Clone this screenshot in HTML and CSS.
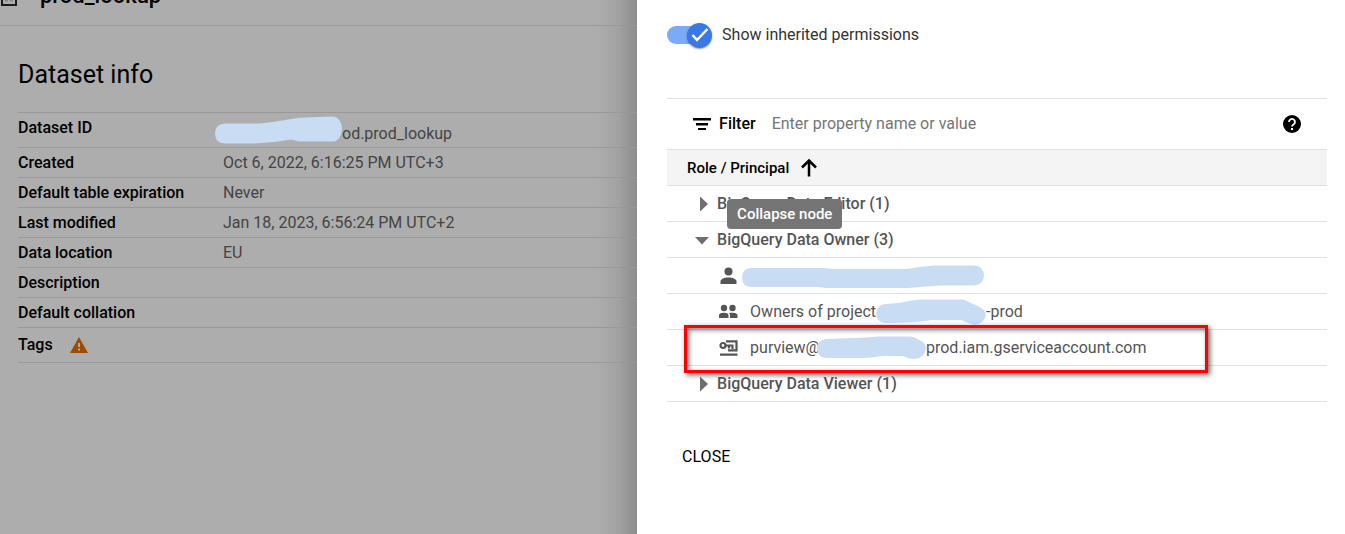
FILE: index.html
```html
<!DOCTYPE html>
<html lang="en">
<head>
    <meta charset="UTF-8">
    <meta name="viewport" content="width=device-width, initial-scale=1.0">
    <title>prod_lookup - Dataset info</title>
    <link rel="stylesheet" href="styles.css">
</head>
<body>

    <main class="dataset">
        <header class="dataset-header">
            <svg width="18" height="20" viewBox="0 0 18 20" fill="none" stroke="#1b1b1b" stroke-width="2">
                <path d="M2 1h14v18H2z"/>
                <path d="M5 14.500h3M10 14.500h3" stroke="#888"/>
            </svg>
            <span>prod_lookup</span>
        </header>

        <section class="dataset-info">
            <h2>Dataset info</h2>
            <table class="info-table">
                <tr class="tall">
                    <th scope="row" class="top">Dataset ID</th>
                    <td>
                        <div class="dataset-id">
                            <svg width="127" height="28" viewBox="0 0 127 28" fill="#c8dcf4">
                                <path d="M10 7.500H44C64 6 76 2 90 1.500L118 .5Q127 2 127 13Q126 25 118 25.500H84L76 23.500Q58 27 40 27.500H10Q0 27 0 17.500Q0 8 10 7.500Z"/>
                            </svg>
                            <span>od.prod_lookup</span>
                        </div>
                    </td>
                </tr>
                <tr>
                    <th scope="row">Created</th>
                    <td>Oct 6, 2022, 6:16:25 PM UTC+3</td>
                </tr>
                <tr>
                    <th scope="row">Default table expiration</th>
                    <td>Never</td>
                </tr>
                <tr>
                    <th scope="row">Last modified</th>
                    <td>Jan 18, 2023, 6:56:24 PM UTC+2</td>
                </tr>
                <tr>
                    <th scope="row">Data location</th>
                    <td>EU</td>
                </tr>
                <tr>
                    <th scope="row">Description</th>
                    <td></td>
                </tr>
                <tr>
                    <th scope="row">Default collation</th>
                    <td></td>
                </tr>
                <tr class="tall">
                    <th scope="row">
                        <div class="tags">
                            <span>Tags</span>
                            <svg width="18" height="16" viewBox="0 0 18 16">
                                <path d="M9 0l9 16H0z" fill="#a04c00"/>
                                <path d="M8 6h2v4H8zM8 11.500h2v2H8z" fill="#adadad"/>
                            </svg>
                        </div>
                    </th>
                    <td></td>
                </tr>
            </table>
        </section>
    </main>

    <aside class="panel">
        <label class="switch">
            <input type="checkbox" checked>
            <span class="track">
                <span class="knob">
                    <svg width="18" height="16" viewBox="0 0 18 16" fill="none" stroke="#fff" stroke-width="2.500">
                        <path d="M1.500 8l4.500 5L16.500 2"/>
                    </svg>
                </span>
            </span>
            <span>Show inherited permissions</span>
        </label>

        <!-- Filter bar -->
        <div class="filter">
            <svg width="18" height="12" viewBox="0 0 18 12">
                <path d="M0 0h18v2.500H0zM3 5h12v2.500H3zM5 10h8v2H5z"/>
            </svg>
            <label for="filter">Filter</label>
            <input type="text" id="filter" placeholder="Enter property name or value">
            <button class="help" type="button" aria-label="Help">
                <svg width="18" height="18" viewBox="0 0 18 18">
                    <circle cx="9" cy="9" r="9"/>
                    <path d="M6 7a3 3 0 1 1 4.800 2.300Q9 10.300 9 11.500" fill="none" stroke="#fff" stroke-width="1.800"/>
                    <path d="M8 13h2v2H8z" fill="#fff"/>
                </svg>
            </button>
        </div>

        <table class="roles">
            <thead>
                <tr>
                    <th scope="col">
                        <button class="sort" type="button">
                            <span>Role / Principal</span>
                            <svg width="16" height="18" viewBox="0 0 16 18" fill="none" stroke="#000" stroke-width="2.500">
                                <path d="M8 17.500V2M1 8.500l7-7 7 7"/>
                            </svg>
                        </button>
                    </th>
                </tr>
            </thead>
            <tbody>
                <tr>
                    <td>
                        <div class="role">
                            <button class="node" type="button" aria-label="Expand node">
                                <svg width="14" height="16" viewBox="0 0 14 16" fill="#6e6e6e"><path d="M5 0.500l8 7.500-8 7.500z"/></svg>
                            </button>
                            <span>BigQuery Data Editor (1)</span>
                        </div>
                    </td>
                </tr>
                <tr>
                    <td>
                        <div class="role">
                            <button class="node" type="button" aria-label="Collapse node">
                                <svg width="14" height="16" viewBox="0 0 14 16" fill="#6e6e6e"><path d="M0 5h14l-7 7.500z"/></svg>
                            </button>
                            <span>BigQuery Data Owner (3)</span>
                            <span class="tooltip">Collapse node</span>
                        </div>
                    </td>
                </tr>
                <tr>
                    <td>
                        <div class="principal user">
                            <svg width="24" height="24" viewBox="0 0 24 24" fill="#555">
                                <circle cx="12.500" cy="7.500" r="4"/>
                                <path d="M4.500 20v-2.500c0-2.500 4-4 8-4s8 1.500 8 4V20z"/>
                            </svg>
                            <svg width="242" height="26" viewBox="0 0 242 26" fill="#c8dcf4">
                                <path d="M10 5H82L92 6H156Q168 6 177 4L192 2.500H232Q242 3 242 13Q241 22 232 22.500H198L166 25H84L76 24H10Q0 24 0 14.500Q0 5 10 5Z"/>
                            </svg>
                        </div>
                    </td>
                </tr>
                <tr>
                    <td>
                        <div class="principal">
                            <svg width="24" height="24" viewBox="0 0 24 24" fill="#555">
                                <circle cx="8" cy="8" r="3.200"/>
                                <circle cx="16.500" cy="8" r="3.200"/>
                                <path d="M3 18v-2.500C3 13.500 5.500 12.800 8 12.800s4.500.7 4.500 2.700V18zM14 18v-2.500c0-1-.3-1.900-1-2.500 4-.5 8.500 0 8.500 2.500V18z"/>
                            </svg>
                            <span>Owners of project</span>
                            <svg width="110" height="26" viewBox="0 0 110 26" fill="#c8dcf4">
                                <path d="M9 5L23 4Q34 1 45 .5H88L97 5Q109 9 110 16Q108 25 99 25.500Q94 25 85 21H56Q38 24 9 24Q0 23 0 14Q1 6 9 5Z"/>
                            </svg>
                            <span>-prod</span>
                        </div>
                    </td>
                </tr>
                <tr>
                    <td>
                        <div class="principal highlighted">
                            <svg width="24" height="24" viewBox="0 0 24 24" fill="none" stroke="#555" stroke-width="2.200">
                                <circle cx="7" cy="9.500" r="2.500"/>
                                <path d="M10 9.500h7.500M13 9.500v3M16.500 9.500v3.500"/>
                                <path d="M10 5.300h10.500v9H12M4 18.700h17.500"/>
                            </svg>
                            <span>purview@</span>
                            <svg class="cover" width="109" height="24" viewBox="0 0 109 24" fill="#c8dcf4">
                                <path d="M9 3L50 1.500L60 .5H93Q99 1 102 4Q109 6 109 13Q107 22 98 23Q91 23 86 20H66L49 22H9Q0 21 0 12Q1 4 9 3Z"/>
                            </svg>
                            <span>prod.iam.gserviceaccount.com</span>
                        </div>
                    </td>
                </tr>
                <tr>
                    <td>
                        <div class="role">
                            <button class="node" type="button" aria-label="Expand node">
                                <svg width="14" height="16" viewBox="0 0 14 16" fill="#6e6e6e"><path d="M5 0.500l8 7.500-8 7.500z"/></svg>
                            </button>
                            <span>BigQuery Data Viewer (1)</span>
                        </div>
                    </td>
                </tr>
            </tbody>
        </table>

        <button class="close" type="button">CLOSE</button>
    </aside>

</body>
</html>
```
FILE: styles.css
```css
* {
    box-sizing: border-box;
}

body {
    margin: 0;
    min-height: 100vh;
    display: grid;
    grid-template-columns: 9fr 10fr;
    font-family: Roboto, "Liberation Sans", sans-serif;
    font-size: 16px;
    line-height: 20px;
    background-color: #adadad;
    overflow: hidden;
}

svg {
    display: block;
    flex: none;
}

button {
    font: inherit;
    color: inherit;
    padding: 0;
    border: none;
    background: none;
    cursor: pointer;
}

table {
    width: 100%;
    border-collapse: collapse;
}

th {
    font-weight: 500;
    text-align: left;
}

/* Dataset page, dimmed behind the panel */
.dataset {
    min-width: 0;
    color: #000;
    background: linear-gradient(to left, #8c8c8c, #a2a2a2 18px, #adadad 40px);
}

.dataset-header {
    height: 26px;
    padding-bottom: 19px;
    display: flex;
    align-items: flex-end;
    gap: 22px;
    font-size: 22px;
    font-weight: 500;
    line-height: 20px;
    border-bottom: 1px solid #999;
    overflow: hidden;
}

.dataset-info {
    padding: 33px 0 0 18px;
}

h2 {
    margin: 0 0 21px;
    font-size: 25px;
    font-weight: 400;
    line-height: 32px;
}

.info-table {
    border-top: 1px solid #999;
}

.info-table th,
.info-table td {
    height: 30px;
    padding: 0;
    border-bottom: 1px solid #999;
}

.info-table th {
    width: 205px;
}

.info-table td {
    color: #444;
}

.info-table .tall th,
.info-table .tall td {
    height: 35px;
}

.info-table .top {
    padding-bottom: 4px;
}

.dataset-id {
    display: flex;
    align-items: flex-end;
    margin-left: -8px;
}

.tags {
    display: flex;
    align-items: center;
    gap: 17px;
}

/* Permissions panel */
.panel {
    min-width: 0;
    padding: 22px 18px 0 30px;
    background-color: #fff;
}

.switch {
    display: flex;
    align-items: center;
    gap: 15px;
    height: 26px;
    margin-bottom: 50px;
    color: #333;
    cursor: pointer;
}

.switch input {
    position: absolute;
    opacity: 0;
}

.track {
    display: flex;
    align-items: center;
    justify-content: flex-end;
    width: 40px;
    height: 18px;
    border-radius: 9px;
    background-color: #7baaf7;
}

.knob {
    display: flex;
    align-items: center;
    justify-content: center;
    flex: none;
    width: 25px;
    height: 25px;
    margin-right: -5px;
    border-radius: 50%;
    background-color: #3b78e7;
    box-shadow: 0 1px 2px rgba(0, 0, 0, 0.4);
}

.filter {
    display: flex;
    align-items: center;
    gap: 8px;
    height: 51px;
    padding: 0 26px;
    border-top: 1px solid #e0e0e0;
}

.filter label {
    font-weight: 500;
}

.filter input {
    flex: 1;
    min-width: 0;
    padding: 0 8px;
    border: none;
    outline: none;
    font: inherit;
    background: none;
}

.filter input::placeholder {
    color: #757575;
}

.roles th,
.roles td {
    height: 36px;
    padding: 0;
    border-bottom: 1px solid #e0e0e0;
}

.roles th {
    padding-left: 20px;
    border-top: 1px solid #e0e0e0;
    background-color: #f4f4f4;
}

.sort {
    display: flex;
    align-items: center;
    gap: 12px;
    font-size: 15px;
    font-weight: 500;
}

.role,
.principal {
    position: relative;
    display: flex;
    align-items: center;
    height: 35px;
    color: #555;
}

.role {
    gap: 8px;
    padding-left: 28px;
    font-weight: 500;
}

.principal {
    padding-left: 49px;
}

.principal svg:first-child {
    margin-right: 10px;
}

.principal.user svg:first-child {
    margin-right: 2px;
}

.principal .cover {
    margin-left: -3px;
}

.tooltip {
    position: absolute;
    top: -23px;
    left: 60px;
    padding: 5px 10px;
    border-radius: 4px;
    color: #fff;
    font-size: 15px;
    background-color: #757575;
}

/* Red frame around the service account */
.highlighted::after {
    content: "";
    position: absolute;
    top: -5px;
    right: 119px;
    bottom: -8px;
    left: 17px;
    border: 3px solid #f00;
    box-shadow: 2px 2px 5px rgba(0, 0, 0, 0.6), inset 2px 2px 5px rgba(0, 0, 0, 0.5);
    pointer-events: none;
}

.close {
    margin: 45px 0 0 15px;
}
```
